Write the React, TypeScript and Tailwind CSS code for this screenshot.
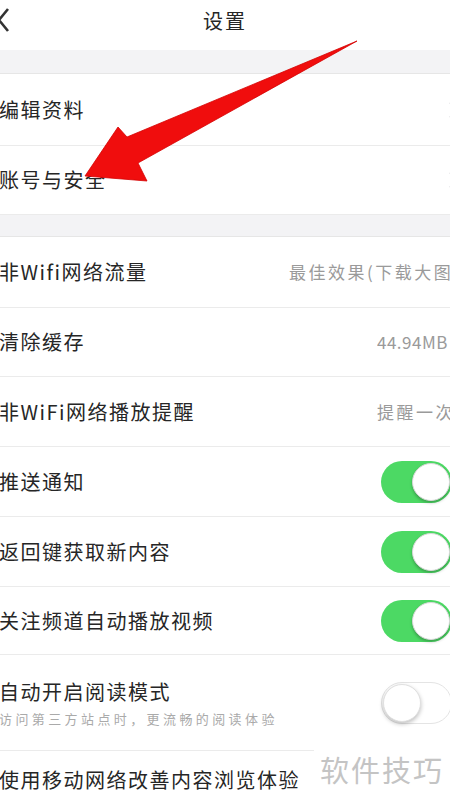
import React from "react";

const font = { fontFamily: '"Noto Sans CJK SC", "Noto Sans", sans-serif' };

const Toggle = ({ on }: { on: boolean }) =>
  on ? (
    <div className="ml-auto -mr-[2px] flex h-[42px] w-[71px] shrink-0 items-center justify-end rounded-full bg-[#4cd964] pr-[2px]">
      <div className="h-[38px] w-[38px] rounded-full border border-[#d8d8d8] bg-white shadow-[0_2px_3px_rgba(0,0,0,0.25)]" />
    </div>
  ) : (
    <div className="ml-auto -mr-[2px] flex h-[42px] w-[71px] shrink-0 items-center rounded-full border border-[#e4e4e4] bg-white pl-[1px]">
      <div className="h-[38px] w-[38px] rounded-full border border-[#e0e0e0] bg-white shadow-[0_2px_4px_rgba(0,0,0,0.25)]" />
    </div>
  );

const Chevron = () => (
  <svg className="ml-auto -mr-[10px] shrink-0" width="12" height="18" viewBox="0 0 12 18">
    <path d="M2 1.5 L10 9 L2 16.5" fill="none" stroke="#c7c7cc" strokeWidth="2" />
  </svg>
);

const Row = ({
  label,
  h,
  children,
}: {
  label: string;
  h: string;
  children?: React.ReactNode;
}) => (
  <div className={`flex items-center overflow-hidden border-b border-[#ebebeb] ${h}`}>
    <span className="-ml-[1px] whitespace-nowrap text-[20px] tracking-[1.5px] text-[#262626]">{label}</span>
    {children}
  </div>
);

const Value = ({ text, w, extra }: { text: string; w: string; extra: string }) => (
  <span className={`ml-auto shrink-0 overflow-hidden whitespace-nowrap text-[#9a9a9a] ${w} ${extra}`}>
    {text}
  </span>
);

export default function App() {
  return (
    <div className="relative h-[801px] w-[450px] overflow-hidden bg-white" style={font}>
      <div className="grid h-[50px] grid-cols-[60px_1fr_60px] items-center">
        <svg width="12" height="30" viewBox="0 0 12 30" className="-mt-[8px]">
          <path d="M8 3 L-1 14 L8 25" fill="none" stroke="#333" strokeWidth="2.6" />
        </svg>
        <div className="-mt-[8px] text-center text-[20px] tracking-[2px] text-[#262626]">设置</div>
        <div />
      </div>

      <div className="h-[24px] border-b border-[#e6e6e6] bg-[#f3f3f5]" />
      <Row label="编辑资料" h="h-[72px]">
        <Chevron />
      </Row>
      <Row label="账号与安全" h="h-[69px]">
        <Chevron />
      </Row>
      <div className="h-[22px] border-b border-[#e6e6e6] bg-[#f3f3f5]" />

      <Row label="非Wifi网络流量" h="h-[71px]">
        <Value text="最佳效果(下载大图)" w="w-[161px]" extra="text-[17px] tracking-[2.5px]" />
      </Row>
      <Row label="清除缓存" h="h-[69px]">
        <Value text="44.94MB" w="w-[73px]" extra="text-[17px] tracking-[0.5px]" />
      </Row>
      <Row label="非WiFi网络播放提醒" h="h-[70px]">
        <Value text="提醒一次" w="w-[73px]" extra="text-[17px] tracking-[2.5px]" />
      </Row>
      <Row label="推送通知" h="h-[70px]">
        <Toggle on />
      </Row>
      <Row label="返回键获取新内容" h="h-[70px]">
        <Toggle on />
      </Row>
      <Row label="关注频道自动播放视频" h="h-[68px]">
        <Toggle on />
      </Row>

      <div className="flex h-[96px] items-center border-b border-[#ebebeb]">
        <div className="flex flex-col">
          <span className="-ml-[1px] whitespace-nowrap text-[20px] leading-[28px] tracking-[1.5px] text-[#262626]">
            自动开启阅读模式
          </span>
          <span className="-ml-[1px] mt-[4px] whitespace-nowrap text-[13px] leading-[18px] tracking-[3.4px] text-[#aaaaaa]">
            访问第三方站点时，更流畅的阅读体验
          </span>
        </div>
        <Toggle on={false} />
      </div>
      <div className="flex h-[60px] items-center">
        <span className="-ml-[1px] -mt-[2px] whitespace-nowrap text-[20px] tracking-[1.5px] text-[#262626]">
          使用移动网络改善内容浏览体验
        </span>
      </div>

      <div className="absolute left-[314px] top-[746px] flex h-[55px] w-[136px] items-start justify-center bg-white pt-[2px] text-[29px] tracking-[2px] text-[#c4c4c4]">
        软件技巧
      </div>

      <svg className="pointer-events-none absolute left-0 top-0" width="450" height="801" viewBox="0 0 450 801">
        <polygon
          points="357,41 127,137 118,127 85,176 147,181 138,163"
          fill="#f00d0d"
          stroke="#d40000"
          strokeWidth="0.8"
          strokeLinejoin="round"
        />
      </svg>
    </div>
  );
}
